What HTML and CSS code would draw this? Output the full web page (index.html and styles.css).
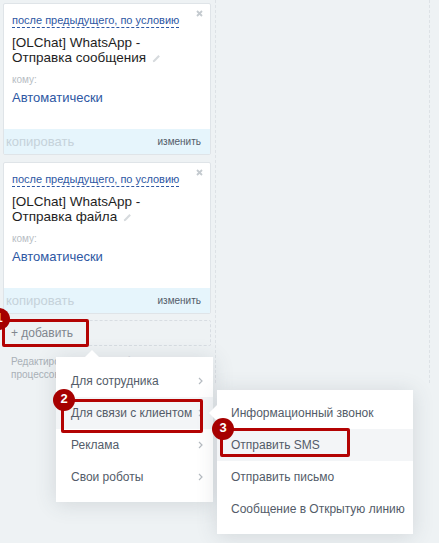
FILE: index.html
```html
<!DOCTYPE html>
<html lang="ru">
<head>
<meta charset="utf-8">
<title>Роботы</title>
<link rel="stylesheet" href="styles.css">
</head>
<body>
<div class="board">
  <div class="columns">
    <div class="col col-main">
      <div class="card">
        <svg class="close" width="7" height="7" viewBox="0 0 7 7"><path d="M1 1L6 6M6 1L1 6" stroke="#c4cacf" stroke-width="1.8"/></svg>
        <div class="card-body">
          <span class="cond">после предыдущего, по условию</span>
          <div class="title">[OLChat] WhatsApp -<br>Отправка сообщения<svg class="pencil" width="9" height="9" viewBox="0 0 9 9"><path d="M0.8 8.2L1.3 6.2L6.4 1.1L7.9 2.6L2.8 7.7Z" fill="#d6dadd"/></svg></div>
          <div class="to-label">кому:</div>
          <div class="to-value">Автоматически</div>
        </div>
        <div class="card-foot"><span class="copy">копировать</span><span class="edit">изменить</span></div>
      </div>
      <div class="card">
        <svg class="close" width="7" height="7" viewBox="0 0 7 7"><path d="M1 1L6 6M6 1L1 6" stroke="#c4cacf" stroke-width="1.8"/></svg>
        <div class="card-body">
          <span class="cond">после предыдущего, по условию</span>
          <div class="title">[OLChat] WhatsApp -<br>Отправка файла<svg class="pencil" width="9" height="9" viewBox="0 0 9 9"><path d="M0.8 8.2L1.3 6.2L6.4 1.1L7.9 2.6L2.8 7.7Z" fill="#d6dadd"/></svg></div>
          <div class="to-label">кому:</div>
          <div class="to-value">Автоматически</div>
        </div>
        <div class="card-foot"><span class="copy">копировать</span><span class="edit">изменить</span></div>
      </div>
      <div class="add"><span class="add-link">+ добавить</span></div>
      <p class="hint">Редактирование стадий бизнес-<br>процессов недоступно</p>
    </div>
    <div class="col col-empty"></div>
  </div>

  <div class="menu menu-1">
    <div class="menu-item">Для сотрудника<svg class="chev" width="5" height="8" viewBox="0 0 5 8"><path d="M1 1L4 4L1 7" fill="none" stroke="#b5bbc1" stroke-width="1.2"/></svg></div>
    <div class="menu-item active">Для связи с клиентом<svg class="chev" width="5" height="8" viewBox="0 0 5 8"><path d="M1 1L4 4L1 7" fill="none" stroke="#b5bbc1" stroke-width="1.2"/></svg></div>
    <div class="menu-item">Реклама<svg class="chev" width="5" height="8" viewBox="0 0 5 8"><path d="M1 1L4 4L1 7" fill="none" stroke="#b5bbc1" stroke-width="1.2"/></svg></div>
    <div class="menu-item">Свои роботы<svg class="chev" width="5" height="8" viewBox="0 0 5 8"><path d="M1 1L4 4L1 7" fill="none" stroke="#b5bbc1" stroke-width="1.2"/></svg></div>
  </div>

  <div class="menu menu-2">
    <div class="menu-item">Информационный звонок</div>
    <div class="menu-item active">Отправить SMS</div>
    <div class="menu-item">Отправить письмо</div>
    <div class="menu-item">Сообщение в Открытую линию</div>
  </div>

  <div class="mark mark-1"></div>
  <div class="mark mark-2"></div>
  <div class="mark mark-3"></div>
  <div class="badge badge-1">1</div>
  <div class="badge badge-2">2</div>
  <div class="badge badge-3">3</div>
</div>
</body>
</html>
```

FILE: styles.css
```css
* { box-sizing: border-box; }

html, body {
  margin: 0;
  padding: 0;
}

body {
  background: #eef2f4;
  font-family: "Liberation Sans", Arial, sans-serif;
  width: 439px;
  height: 543px;
  overflow: hidden;
}

.board {
  position: relative;
  height: 543px;
}

.columns {
  display: flex;
  align-items: stretch;
}

.col-main {
  width: 216px;
  padding: 3px 4px 2px 3px;
  border-right: 1px dashed #dde2e6;
}

.col-empty {
  width: 214px;
  border-right: 1px dashed #dde2e6;
}

/* cards */
.card {
  position: relative;
  height: 152px;
  background: #fff;
  border: 1px solid #dfe4e8;
  border-radius: 2px;
  display: flex;
  flex-direction: column;
}

.card + .card { margin-top: 7px; }

.close {
  position: absolute;
  top: 6px;
  right: 7px;
}

.card-body {
  flex: 1;
  padding: 6px 8px 0 8px;
}

.cond {
  display: inline-block;
  font-size: 11px;
  line-height: 13px;
  color: #2d57a3;
  border-bottom: 1px dashed #2d57a3;
}

.title {
  margin-top: 7px;
  font-size: 13.5px;
  line-height: 15px;
  color: #1e1e1e;
}

.pencil {
  margin-left: 6px;
  vertical-align: -1px;
}

.to-label {
  margin-top: 9px;
  font-size: 10px;
  line-height: 12px;
  color: #b7bdc3;
}

.to-value {
  margin-top: 4px;
  font-size: 13px;
  line-height: 16px;
  color: #2d57a3;
}

.card-foot {
  height: 25px;
  background: #e6f5fc;
  display: flex;
  justify-content: space-between;
  align-items: center;
  padding: 0 9px 0 2px;
}

.copy {
  font-size: 13px;
  color: #c5d2da;
}

.edit {
  font-size: 10px;
  color: #535c69;
}

/* add */
.add {
  margin-top: 6px;
  height: 26px;
  border: 1px dashed #d8dde2;
  border-radius: 2px;
  display: flex;
  align-items: center;
  padding-left: 7px;
}

.add-link {
  font-size: 12px;
  color: #80868e;
}

.hint {
  margin: 9px 0 0 8px;
  font-size: 10px;
  line-height: 13px;
  color: #a9b0b7;
  white-space: nowrap;
}

/* menus */
.menu {
  position: absolute;
  background: #fff;
  box-shadow: 0 2px 20px rgba(60, 72, 88, 0.16);
  padding: 8px 0 9px;
}

.menu-1 {
  left: 56px;
  top: 357px;
  width: 157px;
}

.menu-1::before {
  content: "";
  position: absolute;
  left: 29px;
  top: -7px;
  border-left: 7px solid transparent;
  border-right: 7px solid transparent;
  border-bottom: 7px solid #fff;
}

.menu-2 {
  left: 217px;
  top: 390px;
  width: 196px;
  padding-top: 7px;
}

.menu-2::before {
  content: "";
  position: absolute;
  left: -8px;
  top: 15px;
  border-top: 8px solid transparent;
  border-bottom: 8px solid transparent;
  border-right: 8px solid #fff;
}

.menu-item {
  height: 32px;
  display: flex;
  align-items: center;
  justify-content: space-between;
  padding: 0 10px 0 15px;
  font-size: 12px;
  color: #535c69;
  white-space: nowrap;
}

.menu-2 .menu-item { padding-left: 14px; }

.menu-item.active { background: #f3f5f7; }

/* annotations */
.mark {
  position: absolute;
  border: 3px solid #b30303;
  border-radius: 2px;
}

.mark-1 { left: 2px; top: 319px; width: 87px; height: 28px; }
.mark-2 { left: 61px; top: 399px; width: 142px; height: 34px; }
.mark-3 { left: 220px; top: 428px; width: 130px; height: 29px; }

.badge {
  position: absolute;
  width: 22px;
  height: 22px;
  border-radius: 50%;
  background: #a60000;
  color: #fff;
  font-weight: bold;
  font-size: 13px;
  line-height: 20px;
  text-align: center;
}

.badge-1 { left: -12px; top: 308px; }
.badge-2 { left: 53px; top: 389px; }
.badge-3 { left: 212px; top: 418px; }
```
